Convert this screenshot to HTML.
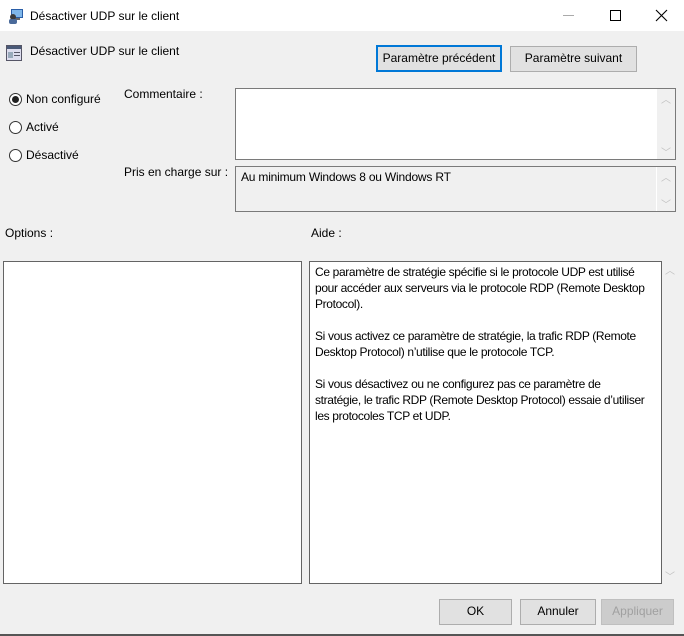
<!DOCTYPE html>
<html><head><meta charset="utf-8"><style>
*{margin:0;padding:0;box-sizing:border-box}
body{width:684px;height:636px;background:#f0f0f0;font-family:"Liberation Sans",sans-serif;font-size:12px;color:#000;position:relative;overflow:hidden}
.a{position:absolute;white-space:nowrap}
.box{position:absolute;border:1px solid #828790;background:#fff}
.btn{position:absolute;border:1px solid #adadad;background:#e1e1e1;text-align:center;line-height:23px}
.rad{position:absolute;width:13px;height:13px;border:1px solid #333;border-radius:50%;background:#fff}
.sb{position:absolute;color:#c0c0c0;font-size:10px}
</style></head><body>
<div class="a" style="left:0;top:0;width:684px;height:31px;background:#fff"></div>
<svg class="a" style="left:8px;top:8px" width="16" height="16"><rect x="3" y="1" width="12" height="9" fill="#2a5ea8"/><rect x="4" y="2" width="10" height="7" fill="#7fb7ea"/><rect x="6" y="10" width="6" height="2" fill="#666"/><circle cx="5" cy="9" r="3" fill="#3b3b3b"/><rect x="1" y="11" width="8" height="5" rx="2" fill="#4a6a9a"/></svg>
<div class="a" style="left:30px;top:9px">Désactiver UDP sur le client</div>
<div class="a" style="left:563px;top:15px;width:11px;height:1px;background:#aaa"></div>
<div class="a" style="left:610px;top:10px;width:11px;height:11px;border:1px solid #000"></div>
<svg class="a" style="left:655px;top:9px" width="13" height="13"><path d="M1 1L12 12M12 1L1 12" stroke="#000" stroke-width="1.1"/></svg>
<svg class="a" style="left:6px;top:45px" width="17" height="17"><rect x="0.5" y="0.5" width="15" height="15" fill="#dde" stroke="#556"/><rect x="1" y="1" width="14" height="3" fill="#4a5a78"/><rect x="2" y="7" width="5" height="6" fill="#9ab"/><rect x="8" y="7" width="6" height="1" fill="#556"/><rect x="8" y="10" width="6" height="1" fill="#556"/></svg>
<div class="a" style="left:30px;top:44px">Désactiver UDP sur le client</div>
<div class="btn" style="left:376px;top:45px;width:126px;height:27px;border:2px solid #0078d7;line-height:23px">Paramètre précédent</div>
<div class="btn" style="left:510px;top:46px;width:127px;height:26px">Paramètre suivant</div>
<div class="rad" style="left:9px;top:93px"></div><div class="a" style="left:12px;top:96px;width:7px;height:7px;border-radius:50%;background:#222"></div>
<div class="a" style="left:26px;top:92px">Non configuré</div>
<div class="rad" style="left:9px;top:121px"></div><div class="a" style="left:26px;top:120px">Activé</div>
<div class="rad" style="left:9px;top:149px"></div><div class="a" style="left:26px;top:148px">Désactivé</div>
<div class="a" style="left:124px;top:87px">Commentaire :</div>
<div class="box" style="left:235px;top:88px;width:441px;height:72px;border-color:#7a7a7a"></div>
<div class="a" style="left:657px;top:89px;width:18px;height:70px;background:#f0f0f0"></div>
<div class="sb" style="left:661px;top:91px">︿</div><div class="sb" style="left:661px;top:144px">﹀</div>
<div class="a" style="left:124px;top:165px">Pris en charge sur :</div>
<div class="box" style="left:235px;top:166px;width:441px;height:46px;background:#f0f0f0;border-color:#7a7a7a"></div>
<div class="a" style="left:241px;top:170px;letter-spacing:-0.2px">Au minimum Windows 8 ou Windows RT</div>
<div class="a" style="left:656px;top:167px;width:1px;height:44px;background:#fff"></div>
<div class="sb" style="left:661px;top:169px">︿</div><div class="sb" style="left:661px;top:196px">﹀</div>
<div class="a" style="left:5px;top:226px">Options :</div>
<div class="a" style="left:311px;top:226px">Aide :</div>
<div class="box" style="left:3px;top:261px;width:299px;height:323px;border-color:#646464"></div>
<div class="box" style="left:309px;top:261px;width:353px;height:323px;border-color:#646464"></div>
<div class="a" style="left:315px;top:264px;line-height:16px;letter-spacing:-0.35px">Ce paramètre de stratégie spécifie si le protocole UDP est utilisé<br>pour accéder aux serveurs via le protocole RDP (Remote Desktop<br>Protocol).<br><br>Si vous activez ce paramètre de stratégie, la trafic RDP (Remote<br>Desktop Protocol) n’utilise que le protocole TCP.<br><br>Si vous désactivez ou ne configurez pas ce paramètre de<br>stratégie, le trafic RDP (Remote Desktop Protocol) essaie d’utiliser<br>les protocoles TCP et UDP.</div>
<div class="sb" style="left:665px;top:262px">︿</div><div class="sb" style="left:665px;top:568px">﹀</div>
<div class="btn" style="left:439px;top:599px;width:73px;height:26px">OK</div>
<div class="btn" style="left:520px;top:599px;width:76px;height:26px">Annuler</div>
<div class="btn" style="left:601px;top:599px;width:73px;height:26px;background:#ccc;border-color:#bfbfbf;color:#a0a0a0">Appliquer</div>
<div class="a" style="left:0;top:634px;width:684px;height:2px;background:#555"></div>
</body></html>
